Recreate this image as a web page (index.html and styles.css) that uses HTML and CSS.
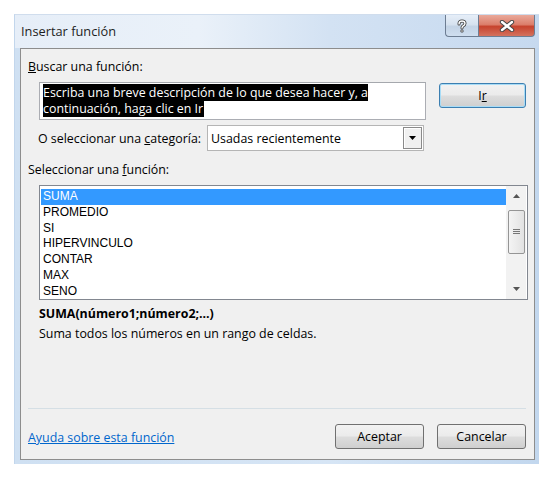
FILE: index.html
```html
<!DOCTYPE html>
<html lang="es">
<head>
<meta charset="utf-8">
<link rel="stylesheet" href="styles.css">
</head>
<body>
<div class="window">
  <div class="titlebar">
    <span class="title">Insertar función</span>
    <div class="caption-btns">
      <div class="cap help">
        <svg width="14" height="14" viewBox="0 0 14 14"><path d="M4 5 Q4 2 7 2 Q10 2 10 4.5 Q10 6 8 7 Q7 7.6 7 9" fill="none" stroke="#3a3a3a" stroke-width="3" stroke-linecap="round"/><path d="M4 5 Q4 2 7 2 Q10 2 10 4.5 Q10 6 8 7 Q7 7.6 7 9" fill="none" stroke="#fff" stroke-width="1.4" stroke-linecap="round"/><circle cx="7" cy="12" r="1.6" fill="#3a3a3a"/><circle cx="7" cy="12" r="0.8" fill="#fff"/></svg>
      </div>
      <div class="cap close">
        <svg width="16" height="12" viewBox="0 0 16 12"><path d="M3 2 L13 10 M13 2 L3 10" stroke="#444" stroke-width="4.4" stroke-linecap="round"/><path d="M3 2 L13 10 M13 2 L3 10" stroke="#fff" stroke-width="2.4" stroke-linecap="round"/></svg>
      </div>
    </div>
  </div>
  <div class="content">
    <div class="label top-label"><u>B</u>uscar una función:</div>
    <div class="search-row">
      <div class="searchbox"><span class="sel">Escriba una breve descripción de lo que desea hacer y, a continuación, haga clic en Ir</span></div>
      <div class="btn default">I<u>r</u></div>
    </div>
    <div class="cat-row">
      <span class="label">O seleccionar una <u>c</u>ategoría:</span>
      <div class="select">
        <span class="select-text">Usadas recientemente</span>
        <span class="drop"><svg width="7" height="4" viewBox="0 0 7 4"><path d="M0 0 H7 L3.5 4 Z" fill="#000"/></svg></span>
      </div>
    </div>
    <div class="label fn-label">Seleccionar una <u>f</u>unción:</div>
    <div class="listbox">
      <div class="items">
        <div class="item selected">SUMA</div>
        <div class="item">PROMEDIO</div>
        <div class="item">SI</div>
        <div class="item">HIPERVINCULO</div>
        <div class="item">CONTAR</div>
        <div class="item">MAX</div>
        <div class="item">SENO</div>
      </div>
      <div class="scrollbar">
        <div class="arrow"><svg width="7" height="4" viewBox="0 0 7 4"><path d="M0 4 H7 L3.5 0 Z" fill="#555"/></svg></div>
        <div class="track"><div class="thumb"><svg width="7" height="6" viewBox="0 0 7 6"><path d="M0 0.5 H7 M0 2.5 H7 M0 4.5 H7" stroke="#777" stroke-width="1"/></svg></div></div>
        <div class="arrow"><svg width="7" height="4" viewBox="0 0 7 4"><path d="M0 0 H7 L3.5 4 Z" fill="#555"/></svg></div>
      </div>
    </div>
    <div class="syntax">SUMA(número1;número2;...)</div>
    <div class="desc">Suma todos los números en un rango de celdas.</div>
    <div class="spacer"></div>
    <div class="sep"></div>
    <div class="bottom-row">
      <a class="link">Ayuda sobre esta función</a>
      <div class="btns">
        <div class="btn wide">Aceptar</div>
        <div class="btn wide">Cancelar</div>
      </div>
    </div>
  </div>
</div>
</body>
</html>
```

FILE: styles.css
```css
html, body {
  margin: 0;
  padding: 0;
  background: #ffffff;
  width: 552px;
  height: 480px;
  overflow: hidden;
}
body {
  font-family: "Open Sans", "Noto Sans", sans-serif;
  font-size: 12.4px;
  color: #000;
}
.window {
  margin: 14px 0 0 14px;
  width: 525px;
  height: 450px;
  background: linear-gradient(90deg, #cfe0f2 0%, #d6e5f5 60%, #c2d7ee 100%);
  display: flex;
  flex-direction: column;
  box-sizing: border-box;
  padding: 0 4px 4px 5px;
  border-left: 1px solid #c2d6ec;
  border-top: 1px solid #d0dded;
}
.titlebar {
  height: 33px;
  display: flex;
  align-items: flex-start;
  justify-content: space-between;
  background: linear-gradient(90deg, #e6eef8 0%, #eaf1f9 35%, #d3e2f3 60%, #c6d9ef 100%);
  margin: 0 -4px 0 -5px;
  padding: 0 4px 0 5px;
}
.title {
  margin-top: 7px;
  margin-left: 1px;
  font-size: 12.8px;
  color: #1e1e1e;
}
.caption-btns {
  display: flex;
  margin-right: 0;
}
.cap {
  height: 22px;
  display: flex;
  align-items: center;
  justify-content: center;
  box-sizing: border-box;
  border: 1px solid #6d7d92;
  border-top: none;
}
.help {
  width: 33px;
  border-radius: 0 0 0 4px;
  border-right: none;
  background: linear-gradient(180deg, #e6eef8 0%, #d6e2ef 45%, #c3d3e5 55%, #cfdeef 100%);
}
.close {
  width: 57px;
  border-radius: 0 0 4px 0;
  background: linear-gradient(180deg, #e9a99b 0%, #dc7f6c 45%, #c7432e 55%, #d4725e 100%);
}
.content {
  flex: 1;
  background: #f0f0f0;
  border: 1px solid #8d8d8d;
  display: flex;
  flex-direction: column;
  padding: 0 8px 0 7px;
}
.label {
  color: #000;
  white-space: nowrap;
}
.top-label {
  margin-top: 9px;
  line-height: 17px;
}
.search-row {
  display: flex;
  align-items: flex-start;
  margin-top: 7px;
  padding-left: 11px;
}
.searchbox {
  width: 387px;
  height: 38px;
  box-sizing: border-box;
  background: #fff;
  border: 1px solid #abadb3;
  border-top-color: #a5a8ad;
  padding: 2px 2px 0 3px;
  line-height: 16px;
}
.sel {
  background: #000;
  color: #fff;
  padding: 0 1px 0 0;
}
.btn {
  width: 87px;
  height: 25px;
  box-sizing: border-box;
  border: 1px solid #707070;
  border-radius: 3px;
  background: linear-gradient(180deg, #f2f2f2 0%, #ebebeb 48%, #dddddd 52%, #cfcfcf 100%);
  display: flex;
  align-items: center;
  justify-content: center;
  color: #000;
}
.btn.wide {
  width: 89px;
}
.btn.default {
  margin-left: 13px;
  margin-top: 1px;
  border-color: #3c7fb1;
  box-shadow: inset 0 0 0 1px #a8dcf6;
}
.cat-row {
  display: flex;
  align-items: center;
  margin-top: 5px;
  padding-left: 10px;
}
.select {
  margin-left: 6px;
  width: 217px;
  height: 26px;
  box-sizing: border-box;
  border: 1px solid #b5b5b5;
  background: #fff;
  display: flex;
  align-items: center;
  justify-content: space-between;
  padding-left: 3px;
}
.drop {
  width: 19px;
  height: 22px;
  margin-right: 1px;
  box-sizing: border-box;
  border: 1px solid #8a8a8a;
  box-shadow: inset 1px 1px 0 #fff;
  background: #f0f0f0;
  display: flex;
  align-items: center;
  justify-content: center;
}
.fn-label {
  margin-top: 10px;
  line-height: 17px;
}
.listbox {
  margin-top: 7px;
  margin-left: 11px;
  width: 489px;
  height: 115px;
  box-sizing: border-box;
  border: 1px solid #828790;
  background: #fff;
  display: flex;
  justify-content: space-between;
}
.items {
  flex: 1;
  padding: 3px 0 0 1px;
  font-family: "Liberation Sans", Arial, sans-serif;
  font-size: 12px;
}
.item {
  height: 15.8px;
  line-height: 15.8px;
  padding-left: 2px;
  color: #000;
}
.item.selected {
  background: #3399ff;
  color: #fff;
}
.scrollbar {
  width: 20px;
  display: flex;
  flex-direction: column;
  background: #f2f2f2;
  margin-right: 1px;
}
.arrow {
  height: 20px;
  display: flex;
  align-items: center;
  justify-content: center;
}
.track {
  flex: 1;
  padding: 4px 1px 0 2px;
}
.thumb {
  height: 44px;
  box-sizing: border-box;
  border: 1px solid #959595;
  border-radius: 2px;
  background: linear-gradient(90deg, #f4f4f4, #e2e2e2);
  display: flex;
  align-items: center;
  justify-content: center;
}
.syntax {
  margin-top: 5px;
  padding-left: 11px;
  font-weight: 700;
  line-height: 17px;
}
.desc {
  margin-top: 3px;
  padding-left: 11px;
  line-height: 17px;
}
.spacer {
  flex: 1;
}
.sep {
  height: 1px;
  background: #d5dfe5;
}
.bottom-row {
  display: flex;
  align-items: center;
  justify-content: space-between;
  margin-top: 15px;
  margin-bottom: 10px;
}
.link {
  color: #0066cc;
  text-decoration: underline;
  margin-top: 2px;
}
.btns {
  display: flex;
  gap: 13px;
}
```
